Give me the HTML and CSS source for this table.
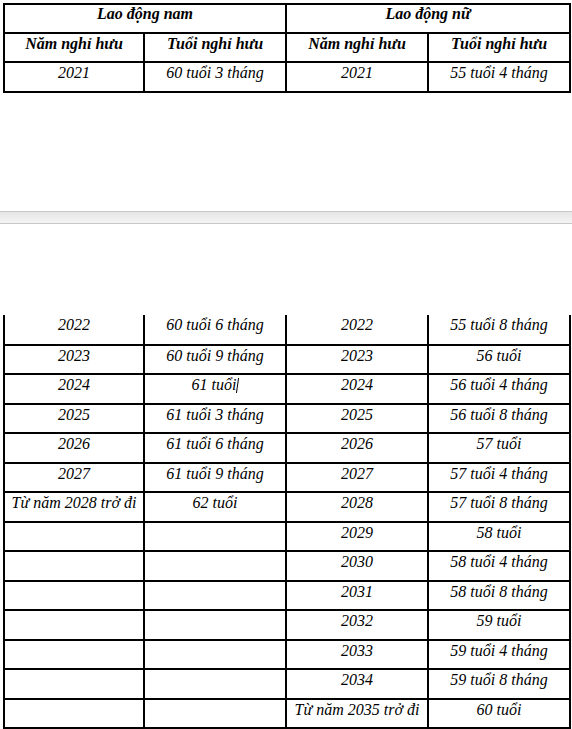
FILE: index.html
```html
<!DOCTYPE html>
<html lang="vi">
<head>
<meta charset="utf-8">
<title>Lộ trình tuổi nghỉ hưu</title>
<link rel="stylesheet" href="styles.css">
</head>
<body>
<table class="grid top-table">
  <colgroup><col class="c1"><col class="c2"><col class="c3"><col class="c4"></colgroup>
  <tr class="row-first">
    <th colspan="2">Lao động nam</th>
    <th colspan="2">Lao động nữ</th>
  </tr>
  <tr>
    <th>Năm nghỉ hưu</th><th>Tuổi nghỉ hưu</th><th>Năm nghỉ hưu</th><th>Tuổi nghỉ hưu</th>
  </tr>
  <tr>
    <td>2021</td><td>60 tuổi 3 tháng</td><td>2021</td><td>55 tuổi 4 tháng</td>
  </tr>
</table>

<div class="page-break"></div>

<table class="grid bottom-table">
  <colgroup><col class="c1"><col class="c2"><col class="c3"><col class="c4"></colgroup>
  <tr><td>2022</td><td>60 tuổi 6 tháng</td><td>2022</td><td>55 tuổi 8 tháng</td></tr>
  <tr><td>2023</td><td>60 tuổi 9 tháng</td><td>2023</td><td>56 tuổi</td></tr>
  <tr><td>2024</td><td>61 tuổi<span class="caret"></span></td><td>2024</td><td>56 tuổi 4 tháng</td></tr>
  <tr><td>2025</td><td>61 tuổi 3 tháng</td><td>2025</td><td>56 tuổi 8 tháng</td></tr>
  <tr><td>2026</td><td>61 tuổi 6 tháng</td><td>2026</td><td>57 tuổi</td></tr>
  <tr><td>2027</td><td>61 tuổi 9 tháng</td><td>2027</td><td>57 tuổi 4 tháng</td></tr>
  <tr><td>Từ năm 2028 trở đi</td><td>62 tuổi</td><td>2028</td><td>57 tuổi 8 tháng</td></tr>
  <tr><td></td><td></td><td>2029</td><td>58 tuổi</td></tr>
  <tr><td></td><td></td><td>2030</td><td>58 tuổi 4 tháng</td></tr>
  <tr><td></td><td></td><td>2031</td><td>58 tuổi 8 tháng</td></tr>
  <tr><td></td><td></td><td>2032</td><td>59 tuổi</td></tr>
  <tr><td></td><td></td><td>2033</td><td>59 tuổi 4 tháng</td></tr>
  <tr><td></td><td></td><td>2034</td><td>59 tuổi 8 tháng</td></tr>
  <tr><td></td><td></td><td>Từ năm 2035 trở đi</td><td>60 tuổi</td></tr>
</table>
</body>
</html>
```
FILE: styles.css
```css
html, body {
  margin: 0;
  padding: 0;
  background: #ffffff;
}

body {
  font-family: "Liberation Serif", "Times New Roman", serif;
  font-style: italic;
  font-size: 16px;
  color: #000000;
}

.grid {
  border-collapse: collapse;
  table-layout: fixed;
  width: 566px;
  margin-left: 3px;
}

.grid .c1 { width: 140px; }
.grid .c2 { width: 142px; }
.grid .c3 { width: 142px; }
.grid .c4 { width: 142px; }

.grid td,
.grid th {
  border: 2px solid #000000;
  padding: 1px 2px 0;
  text-align: center;
  vertical-align: top;
  white-space: nowrap;
  line-height: 18px;
}

.grid th {
  font-weight: bold;
}

.grid tr {
  height: 29.5px;
}

.top-table {
  margin-top: 3px;
}

.top-table .row-first {
  height: 28.5px;
}

.top-table .row-first th {
  padding-top: 0;
}

.page-break {
  margin-top: 118px;
  height: 11px;
  border-top: 1px solid #c8c8c8;
  border-bottom: 1px solid #c8c8c8;
  background: linear-gradient(#e6e6e6, #f4f4f4);
}

.bottom-table {
  margin-top: 91.5px;
}

.bottom-table tr:first-child td {
  border-top: none;
}

.caret {
  display: inline-block;
  width: 1px;
  height: 15px;
  margin-left: 1px;
  background: #000000;
  vertical-align: -3px;
  transform: skewX(-8deg);
}
```
